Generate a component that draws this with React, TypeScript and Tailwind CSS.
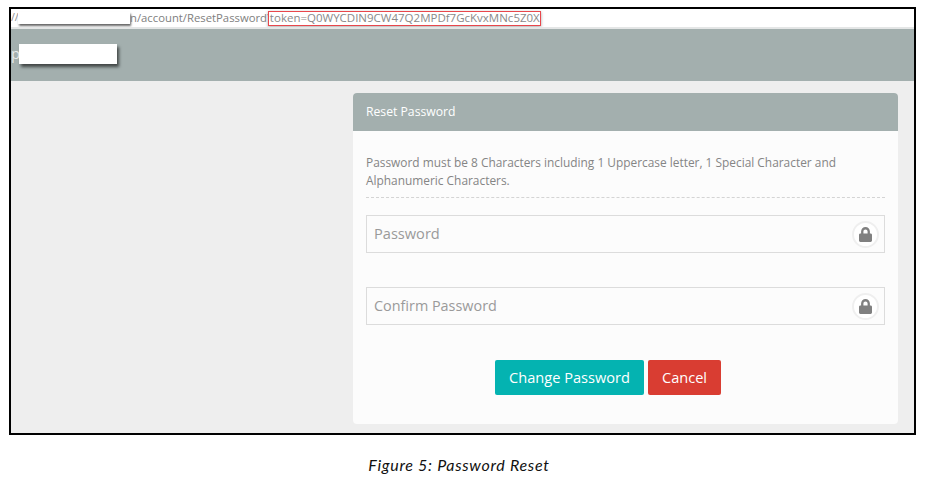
import { FaLock } from "react-icons/fa";

function PasswordField({ placeholder, size }: { placeholder: string; size: string }) {
  return (
    <div className="flex h-[38px] items-center justify-between border border-[#dcdcdc] pl-[7px] pr-[5px]">
      <span className={`${size} text-[#9a9a9a]`}>{placeholder}</span>
      <span className="flex h-[27px] w-[27px] items-center justify-center rounded-full border-2 border-[#efefef] bg-white">
        <FaLock className="h-[15px] w-[13px] text-[#808080]" />
      </span>
    </div>
  );
}

export default function App() {
  return (
    <div className="flex h-[487px] w-[929px] flex-col bg-white font-['Open_Sans',sans-serif]">
      <div className="ml-[9px] mt-[7px] flex h-[428px] w-[907px] flex-col border-2 border-black bg-[#eeeeee]">
        <div className="flex h-[18px] shrink-0 items-center overflow-hidden bg-white text-[11.3px] text-[#8a8a8a]">
          <span className="w-[7px] shrink-0 text-[10.5px]">//</span>
          <span className="h-3 w-[112px] shrink-0 bg-white shadow-[1px_2px_2px_rgba(0,0,0,0.6)]" />
          <span className="text-[#808080]">n/account/ResetPassword?</span>
          <span className="relative -ml-[4px] flex h-[15px] w-[273px] shrink-0 items-center whitespace-nowrap border border-[#e8474c] bg-white pl-px text-[11.5px] shadow-[0_1px_3px_rgba(0,0,0,0.35)]">
            token=Q0WYCDIN9CW47Q2MPDf7GcKvxMNc5Z0X
          </span>
        </div>
        <div className="h-0.5 shrink-0 bg-[#e4e6e6]" />
        <div className="flex h-[52px] shrink-0 items-center bg-[#a3afae] text-[15px] text-[#e8ecec]">
          <span className="-mr-px pb-[3px]">p</span>
          <span className="relative mb-[3px] h-5 w-[98px] bg-white shadow-[2px_3px_3px_rgba(0,0,0,0.6)]" />
        </div>
        <div className="flex min-h-0 flex-1 justify-end pr-4 pt-3">
          <div className="flex h-[331px] w-[545px] flex-col rounded-[4px] bg-[#fcfcfc]">
            <div className="flex h-[38px] shrink-0 items-center rounded-t-[4px] bg-[#a3afae] px-[13px] text-[12.2px] text-white">
              Reset Password
            </div>
            <div className="flex flex-1 flex-col px-[13px] pt-[23px]">
              <p className="text-[11.9px] leading-[17.5px] text-[#858585]">
                Password must be 8 Characters including 1 Uppercase letter, 1 Special Character and Alphanumeric Characters.
              </p>
              <div className="mt-[8px] border-t border-dashed border-[#d4d4d4]" />
              <div className="mt-[17px]">
                <PasswordField placeholder="Password" size="text-[14.6px]" />
              </div>
              <div className="mt-[34px]">
                <PasswordField placeholder="Confirm Password" size="text-[14.4px]" />
              </div>
              <div className="mt-[35px] flex justify-center gap-1 pr-[35px]">
                <button className="h-[35px] w-[149px] rounded-[2px] bg-[#04b3b1] text-[14.6px] text-white">Change Password</button>
                <button className="h-[35px] w-[73px] rounded-[2px] bg-[#d93d32] text-[14.6px] text-white">Cancel</button>
              </div>
            </div>
          </div>
        </div>
      </div>
      <div className="mt-[18px] pr-[11px] text-center font-['Lato',sans-serif] text-[16px] italic tracking-[0.7px] text-[#111]">Figure 5: Password Reset</div>
    </div>
  );
}
